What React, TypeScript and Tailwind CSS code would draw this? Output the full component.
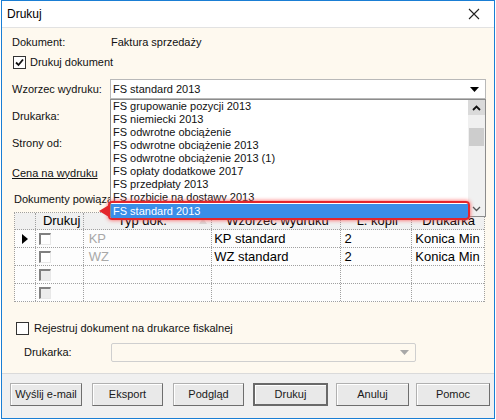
import React from "react";

const items = [
  "FS grupowanie pozycji 2013",
  "FS niemiecki 2013",
  "FS odwrotne obciążenie",
  "FS odwrotne obciążenie 2013",
  "FS odwrotne obciążenie 2013 (1)",
  "FS opłaty dodatkowe 2017",
  "FS przedpłaty 2013",
  "FS rozbicie na dostawy 2013",
];

const cols = ["w-[21px]", "w-[48px]", "w-[129px]", "w-[129px]", "w-[72px]", "w-[72px]"];

function GridCheck({ disabled }: { disabled?: boolean }) {
  return (
    <div
      className={`w-[12px] h-[12px] border-t-2 border-l-2 border-t-[#808080] border-l-[#808080] border-b border-r border-b-[#e8e8e8] border-r-[#e8e8e8] ${
        disabled ? "bg-[#ececec]" : "bg-white"
      }`}
    />
  );
}

function Row({ pointer, typ, wzor, kopie, drukarka, disabled }: {
  pointer?: boolean;
  typ?: string;
  wzor?: string;
  kopie?: string;
  drukarka?: string;
  disabled?: boolean;
}) {
  const cell = "h-full border-r border-dotted border-[#a0a0a0] flex items-center overflow-hidden whitespace-nowrap";
  return (
    <div className="flex h-[18px] border-b border-dotted border-[#a0a0a0] bg-[#fdfdfd]">
      <div className={`${cols[0]} ${cell} justify-center`}>
        {pointer && (
          <svg width="6" height="10" viewBox="0 0 6 10">
            <path d="M0 0 L6 5 L0 10 Z" fill="#000" />
          </svg>
        )}
      </div>
      <div className={`${cols[1]} ${cell} pl-[3px]`}>
        <GridCheck disabled={disabled} />
      </div>
      <div className={`${cols[2]} ${cell} pl-[5px] text-[#a8a8a8]`}>{typ}</div>
      <div className={`${cols[3]} ${cell} pl-[2px]`}>{wzor}</div>
      <div className={`${cols[4]} ${cell} pl-[4px]`}>{kopie}</div>
      <div className={`${cols[5]} ${cell} pl-[3px] border-r-0`}>{drukarka}</div>
    </div>
  );
}

function Button({ label, primary }: { label: string; primary?: boolean }) {
  return (
    <div
      className={`h-[23px] flex items-center justify-center bg-[#e9e9e9] text-[11px] text-[#1a1a1a] ${
        primary
          ? "border-2 border-[#6a6a6a] shadow-[inset_1px_1px_0_#ffffff]"
          : "border border-[#b0b0b0] border-r-[#6e6e6e] border-b-[#6e6e6e] shadow-[inset_1px_1px_0_#ffffff]"
      }`}
    >
      {label}
    </div>
  );
}

export default function App() {
  return (
    <div className="w-[496px] h-[420px] bg-white" style={{ fontFamily: "'Liberation Sans', Arial, sans-serif" }}>
      <div className="ml-[1px] w-[494px] h-[419px] border border-[#1a7ed4] flex flex-col text-[11px] text-[#111]">
        {/* Title bar */}
        <div className="h-[27px] bg-white border-b border-[#e2e2e2] flex items-center justify-between pl-[5px] pr-[14px]">
          <span className="text-[12px] text-black">Drukuj</span>
          <svg width="12" height="12" viewBox="0 0 12 12">
            <path d="M1 1 L11 11 M11 1 L1 11" stroke="#222" strokeWidth="1.1" />
          </svg>
        </div>

        {/* Body */}
        <div className="relative h-[345px] bg-[#fef9ef] pl-[10px] pt-[6px]">
          <div className="flex h-[16px] items-center">
            <span className="w-[98px]">Dokument:</span>
            <span className="pl-[1px]">Faktura sprzedaży</span>
          </div>

          <div className="flex h-[16px] items-center mt-[4px] ml-[1px]">
            <div className="w-[13px] h-[13px] border border-[#333] bg-white flex items-center justify-center">
              <svg width="9" height="9" viewBox="0 0 9 9">
                <path d="M1 4.5 L3.5 7 L8 1.5" stroke="#111" strokeWidth="1.8" fill="none" />
              </svg>
            </div>
            <span className="ml-[4px]">Drukuj dokument</span>
          </div>

          <div className="flex h-[20px] items-center mt-[9px]">
            <span className="w-[98px]">Wzorzec wydruku:</span>
            <div className="w-[376px] h-[20px] bg-white border border-[#b9b9b9] flex items-center justify-between pl-[2px] pr-[6px] text-[11px]">
              <span>FS standard 2013</span>
              <svg width="9" height="5" viewBox="0 0 9 5">
                <path d="M0 0 L9 0 L4.5 5 Z" fill="#000" />
              </svg>
            </div>
          </div>

          <div className="flex h-[16px] items-center mt-[9px]">
            <span className="w-[98px]">Drukarka:</span>
          </div>
          <div className="flex h-[16px] items-center mt-[11px]">
            <span className="w-[98px]">Strony od:</span>
          </div>
          <div className="flex h-[16px] items-center mt-[14px]">
            <span className="underline">Cena na wydruku</span>
          </div>
          <div className="flex h-[16px] items-center mt-[10px] pl-[2px]">
            <span>Dokumenty powiązane</span>
          </div>

          {/* Grid */}
          <div className="mt-[5px] ml-[2px] w-[471px] border border-dotted border-[#a0a0a0] border-b-0 text-[13px] text-black">
            <div className="flex h-[17px] border-b border-dotted border-[#a0a0a0] bg-[#f0f0f0]">
              <div className={`${cols[0]} h-full border-r border-dotted border-[#a0a0a0]`} />
              <div className={`${cols[1]} h-full border-r border-dotted border-[#a0a0a0] flex items-center pl-[7px]`}>Drukuj</div>
              <div className={`${cols[2]} h-full border-r border-dotted border-[#a0a0a0] flex items-center pl-[34px] pr-[4px] justify-between`}>
                <span>Typ dok.</span>
                <svg width="8" height="6" viewBox="0 0 8 6">
                  <path d="M4 0 L8 6 L0 6 Z" fill="#d8d8d8" />
                </svg>
              </div>
              <div className={`${cols[3]} h-full border-r border-dotted border-[#a0a0a0] flex items-center pl-[14px]`}>Wzorzec wydruku</div>
              <div className={`${cols[4]} h-full border-r border-dotted border-[#a0a0a0] flex items-center pl-[16px]`}>L. kopii</div>
              <div className={`${cols[5]} h-full flex items-center pl-[10px]`}>Drukarka</div>
            </div>
            <Row pointer typ="KP" wzor="KP standard" kopie="2" drukarka="Konica Min" />
            <Row typ="WZ" wzor="WZ standard" kopie="2" drukarka="Konica Min" />
            <Row disabled />
            <Row disabled />
          </div>

          <div className="flex h-[16px] items-center mt-[18px] pl-[4px]">
            <div className="w-[13px] h-[13px] border border-[#333] bg-white" />
            <span className="ml-[5px]">Rejestruj dokument na drukarce fiskalnej</span>
          </div>

          <div className="flex h-[19px] items-center mt-[7px] pl-[12px]">
            <span className="w-[87px]">Drukarka:</span>
            <div className="w-[305px] h-[19px] border border-[#cfcfcf] rounded-[2px] flex items-center justify-end pr-[6px]">
              <svg width="9" height="5" viewBox="0 0 9 5">
                <path d="M0 0 L9 0 L4.5 5 Z" fill="#a8a8a8" />
              </svg>
            </div>
          </div>

          {/* Dropdown list */}
          <div className="absolute left-[108px] top-[71px] w-[376px] h-[118px] bg-white border border-[#8c8c8c] flex text-[11px]">
            <div className="flex-1 pt-[0px]">
              {items.map((t) => (
                <div key={t} className="h-[13px] leading-[13px] pl-[2px] whitespace-nowrap">
                  {t}
                </div>
              ))}
              <div className="relative h-[14px] leading-[14px] pl-[2px] bg-[#3a8ee8] text-white">
                FS standard 2013
                <div className="absolute -left-[3px] -top-[3px] -bottom-[2px] right-[-2px] border-2 border-[#e3262c] rounded-[4px] shadow-[0_0_4px_#ff5050]" />
                <svg className="absolute -left-[12px] top-[0px]" width="10" height="14" viewBox="0 0 10 14">
                  <path d="M0 7 L10 1 L10 13 Z" fill="#e3262c" />
                </svg>
              </div>
            </div>
            <div className="w-[17px] h-full bg-[#f0f0f0] flex flex-col items-center">
              <div className="w-full h-[15px] bg-[#dadada] flex items-center justify-center">
                <svg width="9" height="6" viewBox="0 0 9 6">
                  <path d="M1 5 L4.5 1.5 L8 5" stroke="#111" strokeWidth="1.8" fill="none" />
                </svg>
              </div>
              <div className="mt-[13px] w-[15px] h-[18px] bg-[#cdcdcd]" />
              <div className="flex-1" />
              <div className="w-full h-[15px] flex items-center justify-center">
                <svg width="9" height="6" viewBox="0 0 9 6">
                  <path d="M1 1 L4.5 4.5 L8 1" stroke="#555" strokeWidth="1.3" fill="none" />
                </svg>
              </div>
            </div>
          </div>
        </div>

        {/* Footer */}
        <div className="flex-1 bg-[#f0f0f0] border-t border-[#dadada] flex items-start pt-[9px] pl-[8px] gap-[9px]">
          <div className="w-[72px]"><Button label="Wyślij e-mail" /></div>
          <div className="w-[71px] ml-[1px]"><Button label="Eksport" /></div>
          <div className="w-[71px] ml-[1px]"><Button label="Podgląd" /></div>
          <div className="w-[75px]"><Button label="Drukuj" primary /></div>
          <div className="w-[73px] -ml-[1px]"><Button label="Anuluj" /></div>
          <div className="w-[74px] -ml-[2px]"><Button label="Pomoc" /></div>
        </div>
      </div>
    </div>
  );
}
